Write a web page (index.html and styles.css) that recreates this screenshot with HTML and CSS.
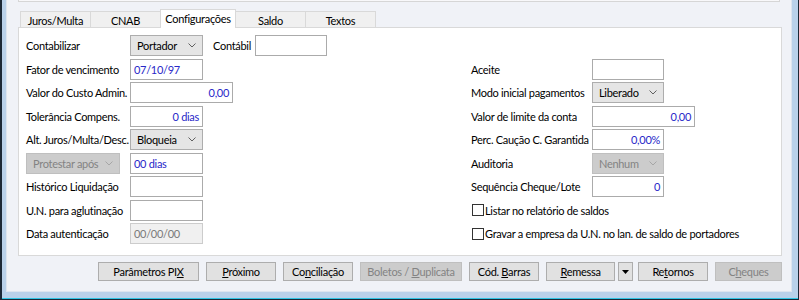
FILE: index.html
```html
<!DOCTYPE html>
<html>
<head>
  <link rel="stylesheet" href="styles.css">
</head>
<body>
  <div class="frame">
    <div class="client">
      <div class="topbox"></div>

      <div class="tabs">
        <div class="tab">Juros/Multa</div>
        <div class="tab">CNAB</div>
        <div class="tab active">Configurações</div>
        <div class="tab">Saldo</div>
        <div class="tab">Textos</div>
      </div>

      <div class="panel">
        <div class="col left">
          <div class="row">
            <span class="lbl">Contabilizar</span>
            <div class="combo w73"><span>Portador</span><svg width="8" height="5"><polyline points="0.5,0.5 4,4 7.5,0.5"/></svg></div>
            <span class="lbl-inline">Contábil</span>
            <div class="field w72"></div>
          </div>
          <div class="row">
            <span class="lbl">Fator de vencimento</span>
            <div class="field w73">07/10/97</div>
          </div>
          <div class="row">
            <span class="lbl">Valor do Custo Admin.</span>
            <div class="field w103 num">0,00</div>
          </div>
          <div class="row">
            <span class="lbl">Tolerância Compens.</span>
            <div class="field w73 num">0 dias</div>
          </div>
          <div class="row">
            <span class="lbl">Alt. Juros/Multa/Desc.</span>
            <div class="combo w73"><span>Bloqueia</span><svg width="8" height="5"><polyline points="0.5,0.5 4,4 7.5,0.5"/></svg></div>
          </div>
          <div class="row">
            <div class="combo off w94"><span>Protestar após</span><svg width="8" height="5"><polyline points="0.5,0.5 4,4 7.5,0.5"/></svg></div>
            <div class="field w73 after-combo">00 dias</div>
          </div>
          <div class="row">
            <span class="lbl">Histórico Liquidação</span>
            <div class="field w73"></div>
          </div>
          <div class="row">
            <span class="lbl">U.N. para aglutinação</span>
            <div class="field w73"></div>
          </div>
          <div class="row">
            <span class="lbl">Data autenticação</span>
            <div class="field off w73">00/00/00</div>
          </div>
        </div>

        <div class="col right">
          <div class="row"></div>
          <div class="row">
            <span class="lbl">Aceite</span>
            <div class="field w72"></div>
          </div>
          <div class="row">
            <span class="lbl">Modo inicial pagamentos</span>
            <div class="combo w72"><span>Liberado</span><svg width="8" height="5"><polyline points="0.5,0.5 4,4 7.5,0.5"/></svg></div>
          </div>
          <div class="row">
            <span class="lbl">Valor de limite da conta</span>
            <div class="field w103 num">0,00</div>
          </div>
          <div class="row">
            <span class="lbl">Perc. Caução C. Garantida</span>
            <div class="field w72 num">0,00%</div>
          </div>
          <div class="row">
            <span class="lbl">Auditoria</span>
            <div class="combo off w72"><span>Nenhum</span><svg width="8" height="5"><polyline points="0.5,0.5 4,4 7.5,0.5"/></svg></div>
          </div>
          <div class="row">
            <span class="lbl">Sequência Cheque/Lote</span>
            <div class="field w72 num">0</div>
          </div>
          <div class="row">
            <span class="check"></span><span>Listar no relatório de saldos</span>
          </div>
          <div class="row">
            <span class="check"></span><span>Gravar a empresa da U.N. no lan. de saldo de portadores</span>
          </div>
        </div>
      </div>

      <div class="buttons">
        <button class="btn w101">Parâmetros PI<u>X</u></button>
        <button class="btn"><u>P</u>róximo</button>
        <button class="btn">Co<u>n</u>ciliação</button>
        <button class="btn off w102">Boletos / <u>D</u>uplicata</button>
        <button class="btn">Cód. <u>B</u>arras</button>
        <button class="btn w69"><u>R</u>emessa</button>
        <button class="btn split"><svg width="7" height="4"><polygon points="0,0 7,0 3.5,4"/></svg></button>
        <button class="btn">Re<u>t</u>ornos</button>
        <button class="btn off w67">C<u>h</u>eques</button>
      </div>
    </div>
  </div>
</body>
</html>
```

FILE: styles.css
```css
body {
  margin: 0;
  background: #1c2836;
  font-family: "Segoe UI", Lato, "Liberation Sans", sans-serif;
  font-size: 11px;
  letter-spacing: -0.3px;
  color: #000;
  overflow: hidden;
}

.frame {
  margin: 0 1px 0 2px;
  height: 299px;
  box-sizing: border-box;
  padding: 0 6px 6px 4px;
  background: #b9d1ea;
  border-bottom: 1px solid #2fc4e4;
}

.client {
  height: 100%;
  box-sizing: border-box;
  padding-left: 11px;
  background: #f0f2f7;
  border: 1px solid #dde5ef;
  border-top: none;
}

.topbox {
  width: 760px;
  height: 1px;
  background: #f8f8fa;
  border: 1px solid #d6d6d6;
  border-top: none;
}

/* tabs */
.tabs {
  display: flex;
  align-items: flex-end;
  height: 18px;
  margin-top: 7px;
  padding-left: 2px;
}

.tab {
  width: 71px;
  height: 16px;
  box-sizing: border-box;
  margin-left: -1px;
  background: #f0f0f0;
  border: 1px solid #d9d9d9;
  border-bottom: none;
  display: flex;
  align-items: center;
  justify-content: center;
  padding-top: 1px;
}

.tab:first-child {
  margin-left: 0;
}

.tab.active {
  position: relative;
  z-index: 1;
  width: 76px;
  height: 19px;
  margin-bottom: -1px;
  background: #fff;
  padding-top: 0;
  padding-bottom: 2px;
}

/* panel */
.panel {
  width: 764px;
  height: 229px;
  box-sizing: border-box;
  padding: 7px 0 0 7px;
  background: #fff;
  border: 1px solid #d9d9d9;
  display: flex;
}

.col.left {
  width: 445px;
}

.row {
  display: flex;
  align-items: center;
  height: 21px;
  margin-bottom: 2.5px;
  white-space: nowrap;
}

.left .lbl {
  width: 104px;
}

.right .lbl {
  width: 121px;
}

.lbl-inline {
  width: 42px;
  margin-left: 10px;
}

.field {
  height: 21px;
  box-sizing: border-box;
  padding: 0 3px;
  line-height: 19px;
  background: #fff;
  border: 1px solid #ababab;
  color: #2828c8;
}

.field.num {
  text-align: right;
}

.field.off {
  background: #f0f0f0;
  border-color: #cccccc;
  color: #7a7a7a;
}

.after-combo {
  margin-left: 10px;
}

.combo {
  height: 21px;
  box-sizing: border-box;
  padding: 0 6px 0 6px;
  display: flex;
  align-items: center;
  justify-content: space-between;
  background: #e5e5e5;
  border: 1px solid #adadad;
}

.combo svg polyline {
  fill: none;
  stroke: #606060;
  stroke-width: 1;
}

.combo.off {
  background: #cccccc;
  border-color: #bfbfbf;
  color: #838383;
}

.combo.off svg polyline {
  stroke: #a6a6a6;
}

.w72 { width: 72px; }
.w73 { width: 73px; }
.w94 { width: 94px; }
.w103 { width: 103px; }

.check {
  width: 12px;
  height: 12px;
  box-sizing: border-box;
  margin: 0 1px 0 1px;
  background: #fff;
  border: 1px solid #333;
}

/* bottom buttons */
.buttons {
  width: 764px;
  margin-top: 6px;
  display: flex;
  justify-content: flex-end;
  gap: 7px;
}

.btn {
  width: 70px;
  height: 19px;
  padding: 0;
  font: inherit;
  letter-spacing: inherit;
  color: #000;
  background: #e1e1e1;
  border: 1px solid #adadad;
  border-radius: 0;
  white-space: nowrap;
}

.btn.off {
  background: #cccccc;
  border-color: #bfbfbf;
  color: #838383;
}

.btn.split {
  width: 15px;
  margin: 0 -2px 0 -4px;
  line-height: 0;
}

.w101 { width: 101px; }
.w102 { width: 102px; }
.w69 { width: 69px; }
.w67 { width: 67px; }
```
